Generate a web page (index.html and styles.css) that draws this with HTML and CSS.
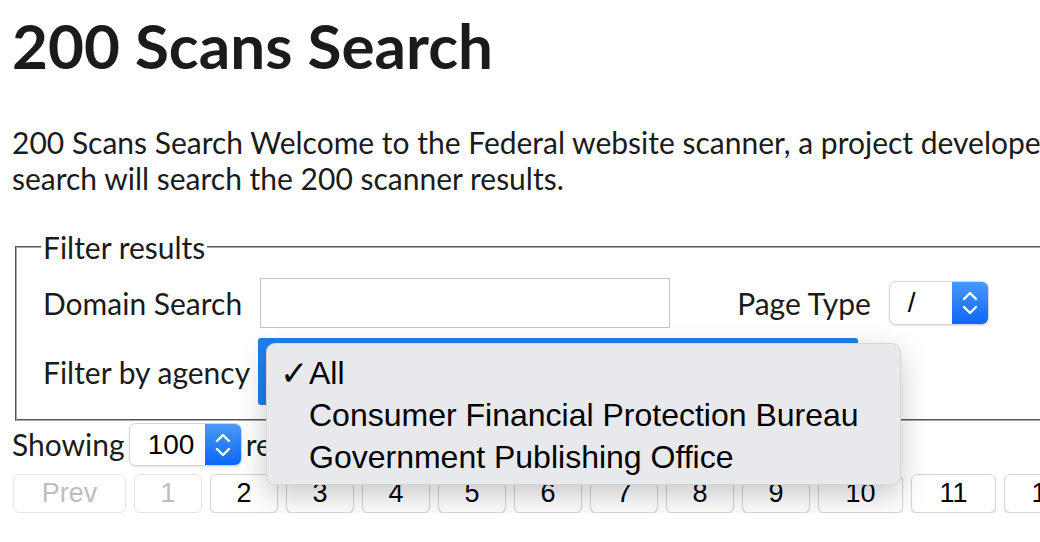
FILE: index.html
```html
<!DOCTYPE html>
<html lang="en">
<head>
<meta charset="utf-8">
<title>200 Scans Search</title>
<link rel="stylesheet" href="styles.css">
</head>
<body>
<div class="page">
  <h1 class="title">200 Scans Search</h1>
  <p class="intro">200 Scans Search Welcome to the Federal website scanner, a project developed by the General Services Administration. This<br>search will search the 200 scanner results.</p>

  <form class="filters-form">
    <fieldset class="filters">
      <legend class="filters-legend">Filter results</legend>
      <div class="filter-row">
        <label class="filter-label" for="domain">Domain Search</label>
        <span class="text-input" id="domain"></span>
        <label class="filter-label page-type-label">Page Type</label>
        <span class="select select-page-type">
          <span class="select-value">/</span>
          <span class="stepper">
            <svg width="20" height="30" viewBox="0 0 20 30"><path d="M4 11 L10 5 L16 11 M4 19 L10 25 L16 19" fill="none" stroke="#fff" stroke-width="2.4" stroke-linecap="round" stroke-linejoin="round"/></svg>
          </span>
        </span>
      </div>
      <div class="filter-row">
        <label class="filter-label">Filter by agency</label>
        <span class="agency-select"></span>
      </div>
    </fieldset>
  </form>

  <div class="showing">
    <span>Showing</span>
    <span class="select select-count">
      <span class="select-value">100</span>
      <span class="stepper">
        <svg width="20" height="30" viewBox="0 0 20 30"><path d="M4 11 L10 5 L16 11 M4 19 L10 25 L16 19" fill="none" stroke="#fff" stroke-width="2.4" stroke-linecap="round" stroke-linejoin="round"/></svg>
      </span>
    </span>
    <span>records per page</span>
  </div>

  <nav class="pager">
    <button class="page-btn prev disabled">Prev</button>
    <button class="page-btn disabled">1</button>
    <button class="page-btn">2</button>
    <button class="page-btn">3</button>
    <button class="page-btn">4</button>
    <button class="page-btn">5</button>
    <button class="page-btn">6</button>
    <button class="page-btn">7</button>
    <button class="page-btn">8</button>
    <button class="page-btn">9</button>
    <button class="page-btn wide">10</button>
    <button class="page-btn wide">11</button>
    <button class="page-btn wide">12</button>
    <button class="page-btn wide">13</button>
  </nav>

  <ul class="menu">
    <li class="menu-item"><span class="check">✓</span>All</li>
    <li class="menu-item"><span class="check"></span>Consumer Financial Protection Bureau</li>
    <li class="menu-item"><span class="check"></span>Government Publishing Office</li>
  </ul>
</div>
</body>
</html>
```

FILE: styles.css
```css
html, body {
  margin: 0;
  padding: 0;
  background: #fff;
  overflow: hidden;
}

body {
  font-family: "Lato", "Liberation Sans", sans-serif;
  color: #1b1b1b;
}

.page {
  position: relative;
  width: 1700px;
  padding: 0 0 0 12px;
}

.title {
  margin: 0;
  padding-top: 10px;
  font-size: 62px;
  line-height: 70px;
  font-weight: 700;
}

.intro {
  margin: 44px 0 0 0;
  font-size: 30px;
  line-height: 36px;
}

.filters-form {
  margin: 34px 0 0 3px;
}

.filters {
  margin: 0;
  padding: 14px 0 14px 24px;
  border: 2px groove #a8a8a8;
  border-right: none;
}

.filters-legend {
  padding: 0 2px;
  font-size: 30px;
  line-height: 34px;
}

.filter-row {
  display: flex;
  align-items: center;
  padding-left: 2px;
}

.filter-row + .filter-row {
  margin-top: 10px;
}

.filter-label {
  font-size: 30px;
}

.text-input {
  display: block;
  width: 408px;
  height: 48px;
  margin-left: 18px;
  border: 1px solid #c4c4c4;
  background: #fff;
}

.page-type-label {
  margin-left: 67px;
}

.select {
  display: inline-flex;
  align-items: stretch;
  height: 44px;
  box-sizing: border-box;
  border: 1px solid #d6d6d6;
  border-radius: 7px;
  background: #fff;
  box-shadow: 0 1px 2px rgba(0, 0, 0, 0.12);
  overflow: hidden;
  font-family: "Liberation Sans", Arial, sans-serif;
  font-size: 28px;
  color: #000;
}

.select-value {
  display: flex;
  align-items: center;
  flex: 1;
}

.stepper {
  display: flex;
  align-items: center;
  justify-content: center;
  width: 36px;
  background: linear-gradient(#4a99f8, #0b67f6);
}

.select-page-type {
  width: 100px;
  margin-left: 18px;
}

.select-page-type .select-value {
  padding-left: 18px;
}

.agency-select {
  display: block;
  width: 600px;
  height: 67px;
  margin-left: 8px;
  background: #1f80ef;
  border-radius: 3px;
}

.showing {
  display: flex;
  align-items: center;
  gap: 4px;
  margin-top: 2px;
  font-size: 30px;
  line-height: 43px;
  white-space: nowrap;
}

.select-count {
  width: 113px;
  height: 43px;
}

.select-count .select-value {
  padding-left: 18px;
}

.pager {
  display: flex;
  gap: 8px;
  margin-top: 8px;
  padding-left: 1px;
}

.page-btn {
  height: 39px;
  min-width: 68px;
  padding: 0;
  border: 1px solid #d4d4d4;
  border-radius: 6px;
  background: #fff;
  box-shadow: 0 1px 1px rgba(0, 0, 0, 0.12);
  font-family: "Liberation Sans", Arial, sans-serif;
  font-size: 27px;
  color: #000;
}

.page-btn.wide {
  min-width: 85px;
}

.page-btn.prev {
  min-width: 113px;
}

.page-btn.disabled {
  color: #bdbdbd;
  border-color: #e4e4e4;
  box-shadow: none;
}

.menu {
  position: absolute;
  left: 266px;
  top: 343px;
  width: 635px;
  height: 142px;
  box-sizing: border-box;
  margin: 0;
  padding: 8px 0;
  list-style: none;
  background: #e7e9ed;
  border: 1px solid rgba(0, 0, 0, 0.08);
  border-radius: 9px;
  box-shadow: 0 10px 30px rgba(0, 0, 0, 0.22);
  font-family: "Liberation Sans", Arial, sans-serif;
  font-size: 32px;
  line-height: 42px;
  color: #000;
}

.menu-item {
  display: flex;
}

.check {
  width: 42px;
  box-sizing: border-box;
  padding-left: 13px;
  font-family: "DejaVu Sans", sans-serif;
  font-weight: 700;
  font-size: 34px;
}
```
